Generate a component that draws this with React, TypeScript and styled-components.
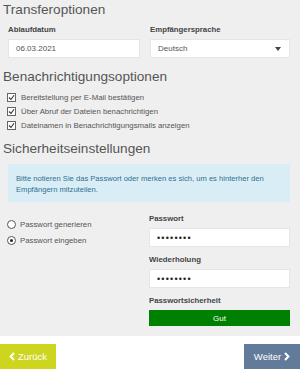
import React from "react";
import styled, { createGlobalStyle } from "styled-components";

const GlobalStyle = createGlobalStyle`
	html, body {
		margin: 0;
		padding: 0;
		background: #ffffff;
		font-family: "Liberation Sans", Arial, sans-serif;
	}
`;

const App: React.FC = () => {
	return (
		<Page>
			<GlobalStyle />
			<Main>
				<Heading>Transferoptionen</Heading>
				<TwoCols>
					<Field>
						<Label>Ablaufdatum</Label>
						<Input>06.03.2021</Input>
					</Field>
					<Field>
						<Label>Empfängersprache</Label>
						<Input>
							Deutsch
							<Caret />
						</Input>
					</Field>
				</TwoCols>

				<Heading $top={10}>Benachrichtigungsoptionen</Heading>
				<CheckList>
					{[
						"Bereitstellung per E-Mail bestätigen",
						"Über Abruf der Dateien benachrichtigen",
						"Dateinamen in Benachrichtigungsmails anzeigen",
					].map((text) => (
						<CheckRow key={text}>
							<CheckBox>
								<svg width="7" height="7" viewBox="0 0 7 7">
									<path d="M1 3.5 L3 5.5 L6 1.2" fill="none" stroke="#333" strokeWidth="1.1" />
								</svg>
							</CheckBox>
							{text}
						</CheckRow>
					))}
				</CheckList>

				<Heading $top={9}>Sicherheitseinstellungen</Heading>
				<Info>
					Bitte notieren Sie das Passwort oder merken es sich, um es hinterher den Empfängern mitzuteilen.
				</Info>

				<SecurityGrid>
					<RadioList>
						<RadioRow>
							<Radio />
							Passwort generieren
						</RadioRow>
						<RadioRow>
							<Radio $checked />
							Passwort eingeben
						</RadioRow>
					</RadioList>
					<PasswordCol>
						<Field>
							<Label>Passwort</Label>
							<Input $dots>••••••••</Input>
						</Field>
						<Field>
							<Label>Wiederholung</Label>
							<Input $dots>••••••••</Input>
						</Field>
						<Field>
							<Label>Passwortsicherheit</Label>
							<Strength>Gut</Strength>
						</Field>
					</PasswordCol>
				</SecurityGrid>
			</Main>
			<Footer>
				<NavButton $bg="#cdd51f">
					<Chevron>
						<svg width="6" height="9" viewBox="0 0 6 9">
							<path d="M5 1 L1.6 4.5 L5 8" fill="none" stroke="#fff" strokeWidth="2" />
						</svg>
					</Chevron>
					Zurück
				</NavButton>
				<NavButton $bg="#627b9b">
					Weiter
					<Chevron>
						<svg width="6" height="9" viewBox="0 0 6 9">
							<path d="M1 1 L4.4 4.5 L1 8" fill="none" stroke="#fff" strokeWidth="2" />
						</svg>
					</Chevron>
				</NavButton>
			</Footer>
		</Page>
	);
};

const Page = styled.div`
	width: 300px;
	height: 369px;
	display: flex;
	flex-direction: column;
	overflow: hidden;
`;

const Main = styled.div`
	background: #efefef;
	height: 336px;
	padding: 1px 10px 0 8px;
	box-sizing: border-box;
`;

const Heading = styled.h2<{ $top?: number }>`
	margin: ${({ $top }) => $top || 0}px 0 0 -5px;
	font-size: 13.6px;
	font-weight: normal;
	line-height: 18px;
	color: #555;
`;

const TwoCols = styled.div`
	display: grid;
	grid-template-columns: 132px 140px;
	gap: 10px;
	margin-top: 6px;
`;

const Field = styled.div`
	display: flex;
	flex-direction: column;
`;

const Label = styled.div`
	font-size: 7.8px;
	font-weight: bold;
	color: #444;
	line-height: 10px;
	margin-bottom: 4px;
`;

const Input = styled.div<{ $dots?: boolean }>`
	position: relative;
	height: 19px;
	background: #fff;
	border: 1px solid #e6e6e6;
	box-sizing: border-box;
	padding-left: 7px;
	display: flex;
	align-items: center;
	font-size: ${({ $dots }) => ($dots ? "9px" : "8px")};
	letter-spacing: ${({ $dots }) => ($dots ? "1.2px" : "0")};
	color: ${({ $dots }) => ($dots ? "#222" : "#555")};
`;

const Caret = styled.span`
	position: absolute;
	right: 8px;
	top: 7px;
	width: 0;
	height: 0;
	border-left: 3.5px solid transparent;
	border-right: 3.5px solid transparent;
	border-top: 4px solid #444;
`;

const CheckList = styled.div`
	display: flex;
	flex-direction: column;
	gap: 3px;
	margin-top: 6px;
`;

const CheckRow = styled.div`
	display: flex;
	align-items: center;
	gap: 5px;
	font-size: 7.8px;
	line-height: 11px;
	color: #555;
	margin-left: -1px;
`;

const CheckBox = styled.span`
	width: 7px;
	height: 7px;
	border: 1px solid #666;
	background: #fff;
	display: flex;
	align-items: center;
	justify-content: center;
`;

const Info = styled.div`
	margin-top: 6px;
	background: #d9edf7;
	color: #31708f;
	font-size: 7.6px;
	line-height: 11px;
	padding: 9px 8px 7px 8px;
	height: 38px;
	box-sizing: border-box;
`;

const SecurityGrid = styled.div`
	display: grid;
	grid-template-columns: 140px 142px;
	margin-top: 12px;
`;

const RadioList = styled.div`
	display: flex;
	flex-direction: column;
	gap: 5px;
	padding-top: 5px;
`;

const RadioRow = styled.div`
	display: flex;
	align-items: center;
	gap: 4px;
	font-size: 7.8px;
	line-height: 11px;
	color: #555;
	margin-left: -1px;
`;

const Radio = styled.span<{ $checked?: boolean }>`
	width: 7px;
	height: 7px;
	border-radius: 50%;
	border: 1px solid #555;
	background: #fff;
	display: flex;
	align-items: center;
	justify-content: center;
	&::after {
		content: "";
		width: 3px;
		height: 3px;
		border-radius: 50%;
		background: ${({ $checked }) => ($checked ? "#222" : "transparent")};
	}
`;

const PasswordCol = styled.div`
	display: flex;
	flex-direction: column;
	gap: 8px;
	padding-left: 1px;
`;

const Strength = styled.div`
	height: 16px;
	background: #008000;
	color: #fff;
	font-size: 8px;
	display: flex;
	align-items: center;
	justify-content: center;
`;

const Footer = styled.div`
	flex: 1;
	background: #fff;
	display: flex;
	justify-content: space-between;
	align-items: flex-end;
`;

const NavButton = styled.div<{ $bg: string }>`
	width: 56px;
	height: 25px;
	background: ${({ $bg }) => $bg};
	color: #fff;
	font-size: 9.5px;
	display: flex;
	align-items: center;
	justify-content: center;
	gap: 3px;
`;

const Chevron = styled.span`
	display: flex;
	align-items: center;
`;

export default App;
